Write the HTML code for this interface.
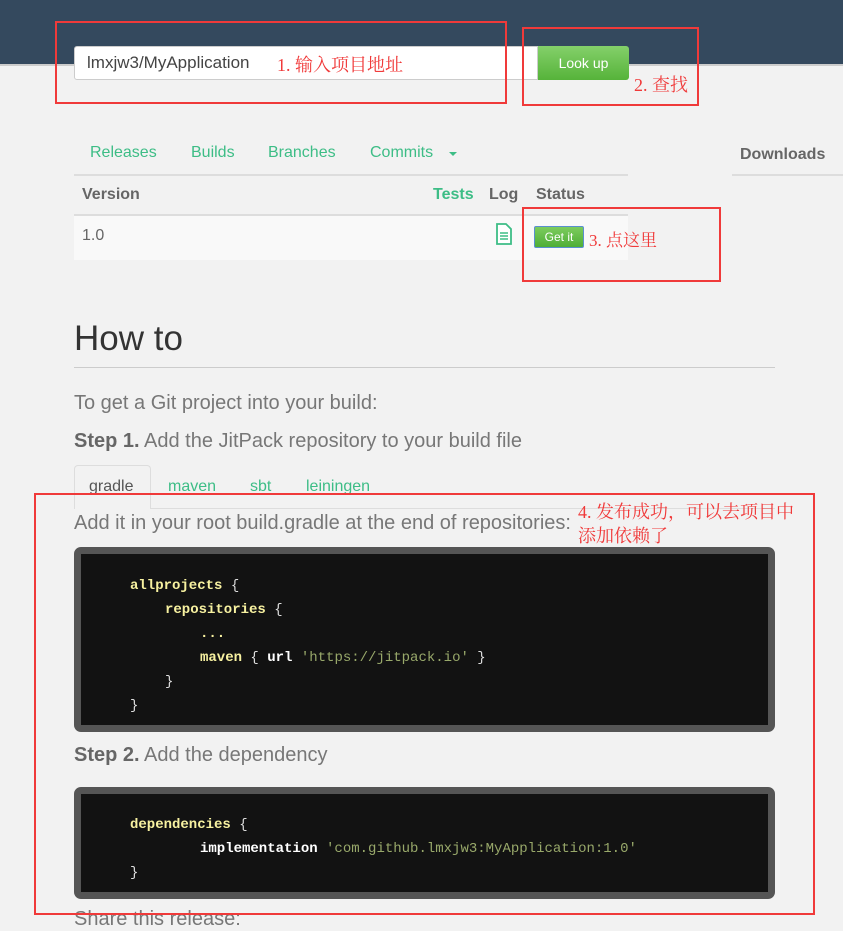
<!DOCTYPE html>
<html><head><meta charset="utf-8"><style>
body{margin:0;width:843px;height:916px;overflow:hidden;background:#f2f2f2;font-family:"Liberation Sans","Noto Sans CJK SC",sans-serif;position:relative;color:#555}
.a{position:absolute;white-space:nowrap}
.g{color:#3dbd86}
.r{color:#f03a3a;font-family:"Liberation Serif","Noto Serif CJK SC",serif}
.box{position:absolute;border:2px solid #f03a3a}
.code{position:absolute;left:74px;width:687px;background:#121212;border:7px solid #555;border-radius:7px}
.code div{position:absolute;font-family:"Liberation Mono",monospace;font-weight:bold;font-size:14px;color:#fff;white-space:pre}
.y{color:#f7f1a0}.s{color:#98a86a;font-weight:normal}.w{color:#ddd;font-weight:normal}
</style></head><body>
<div class="a" style="left:0;top:0;width:843px;height:64px;background:#34495e"></div>
<div class="a" style="left:0;top:64px;width:843px;height:2px;background:#ccc"></div>
<div class="a" style="left:74px;top:46px;width:462px;height:32px;background:#fff;border:1px solid #ccc;border-radius:3px 0 0 3px"></div>
<div class="a" style="left:87px;top:53px;font-size:17px;color:#444">lmxjw3/MyApplication</div>
<div class="a r" style="left:277px;top:51px;font-size:18px">1. 输入项目地址</div>
<div class="a" style="left:538px;top:46px;width:91px;height:34px;background:linear-gradient(#84d06a,#56b33a);border-radius:0 3px 3px 0;color:#fff;font-size:14px;text-align:center;line-height:34px">Look up</div>
<div class="a r" style="left:634px;top:71px;font-size:18px">2. 查找</div>

<div class="a g" style="left:90px;top:144px;font-size:16px">Releases</div>
<div class="a g" style="left:191px;top:144px;font-size:16px">Builds</div>
<div class="a g" style="left:268px;top:144px;font-size:16px">Branches</div>
<div class="a g" style="left:370px;top:144px;font-size:16px">Commits</div>
<div class="a" style="left:449px;top:152px;border:4px solid transparent;border-top:4px solid #3dbd86"></div>
<div class="a" style="left:74px;top:174px;width:554px;height:2px;background:#ddd"></div>
<div class="a" style="left:740px;top:146px;font-size:16px;font-weight:bold;color:#666">Downloads</div>
<div class="a" style="left:732px;top:174px;width:111px;height:2px;background:#ddd"></div>

<div class="a" style="left:82px;top:186px;font-size:16px;font-weight:bold;color:#666">Version</div>
<div class="a g" style="left:433px;top:186px;font-size:16px;font-weight:bold">Tests</div>
<div class="a" style="left:489px;top:186px;font-size:16px;font-weight:bold;color:#666">Log</div>
<div class="a" style="left:536px;top:186px;font-size:16px;font-weight:bold;color:#666">Status</div>
<div class="a" style="left:74px;top:214px;width:554px;height:2px;background:#ddd"></div>
<div class="a" style="left:74px;top:216px;width:554px;height:44px;background:#f9f9f9"></div>
<div class="a" style="left:82px;top:227px;font-size:16px;color:#666">1.0</div>
<svg class="a" style="left:495px;top:223px" width="18" height="22" viewBox="0 0 18 22"><path d="M2 1h9l5 5v15H2z" fill="#fff" stroke="#3dbd86" stroke-width="1.8"/><path d="M5 10h8M5 13h8M5 16h8" stroke="#3dbd86" stroke-width="1.5"/></svg>
<div class="a" style="left:534px;top:226px;width:48px;height:20px;background:linear-gradient(#7ccc5e,#4fae36);border:1px solid #5a8fd0;border-radius:2px;color:#fff;font-size:12px;text-align:center;line-height:20px">Get it</div>
<div class="a r" style="left:589px;top:226px;font-size:17px">3. 点这里</div>

<div class="a" style="left:74px;top:319px;font-size:35px;color:#333">How to</div>
<div class="a" style="left:74px;top:367px;width:701px;height:1px;background:#ccc"></div>
<div class="a" style="left:74px;top:392px;font-size:20px;color:#777">To get a Git project into your build:</div>
<div class="a" style="left:74px;top:430px;font-size:20px;color:#777"><b style="color:#666">Step 1.</b> Add the JitPack repository to your build file</div>

<div class="a" style="left:74px;top:465px;width:75px;height:43px;border:1px solid #ddd;border-bottom:none;border-radius:4px 4px 0 0;background:#f2f2f2"></div>
<div class="a" style="left:150px;top:508px;width:625px;height:1px;background:#ddd"></div>
<div class="a" style="left:89px;top:478px;font-size:16px;color:#555">gradle</div>
<div class="a g" style="left:168px;top:478px;font-size:16px">maven</div>
<div class="a g" style="left:250px;top:478px;font-size:16px">sbt</div>
<div class="a g" style="left:306px;top:478px;font-size:16px">leiningen</div>
<div class="a" style="left:74px;top:512px;font-size:20px;color:#777">Add it in your root build.gradle at the end of repositories:</div>
<div class="a r" style="left:578px;top:500px;font-size:18px;line-height:24px">4. 发布成功，可以去项目中<br>添加依赖了</div>

<div class="code" style="top:547px;height:171px">
<div style="left:49px;top:24px"><span class="y">allprojects</span> <span class="w">{</span></div>
<div style="left:84px;top:48px"><span class="y">repositories</span> <span class="w">{</span></div>
<div style="left:119px;top:72px"><span class="y">...</span></div>
<div style="left:119px;top:96px"><span class="y">maven</span> <span class="w">{</span> url <span class="s">'https://jitpack.io'</span> <span class="w">}</span></div>
<div style="left:84px;top:120px"><span class="w">}</span></div>
<div style="left:49px;top:144px"><span class="w">}</span></div>
</div>

<div class="a" style="left:74px;top:744px;font-size:20px;color:#777"><b style="color:#666">Step 2.</b> Add the dependency</div>

<div class="code" style="top:787px;height:98px">
<div style="left:49px;top:23px"><span class="y">dependencies</span> <span class="w">{</span></div>
<div style="left:119px;top:47px">implementation <span class="s">'com.github.lmxjw3:MyApplication:1.0'</span></div>
<div style="left:49px;top:71px"><span class="w">}</span></div>
</div>
<div class="a" style="left:74px;top:908px;font-size:20px;color:#777">Share this release:</div>

<div class="box" style="left:55px;top:21px;width:448px;height:79px"></div>
<div class="box" style="left:522px;top:27px;width:173px;height:75px"></div>
<div class="box" style="left:522px;top:207px;width:195px;height:71px"></div>
<div class="box" style="left:34px;top:493px;width:777px;height:418px"></div>
</body></html>
